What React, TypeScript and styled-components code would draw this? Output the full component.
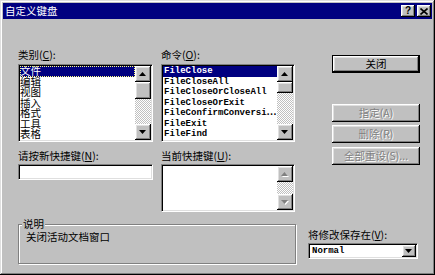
import React from "react";
import styled, { createGlobalStyle } from "styled-components";

const cjk = `"Noto Sans CJK SC", "Liberation Sans", sans-serif`;
const mono = `"Liberation Mono", "Noto Sans CJK SC", monospace`;

const GlobalStyle = createGlobalStyle`
  html, body {
    margin: 0;
    padding: 0;
    background: #c0c0c0;
  }
  body {
    font-family: ${cjk};
  }
`;

const raised = `
  box-shadow: inset -1px -1px #000, inset 1px 1px #fff, inset -2px -2px #808080, inset 2px 2px #dfdfdf;
`;

const sunken = `
  border: 1px solid;
  border-color: #808080 #fff #fff #808080;
  box-shadow: inset 1px 1px #000, inset -1px -1px #dfdfdf;
`;

const Window = styled.div`
  width: 435px;
  height: 275px;
  box-sizing: border-box;
  padding: 3px;
  background: #c0c0c0;
  box-shadow: inset -1px -1px #000, inset 1px 1px #dfdfdf, inset -2px -2px #808080, inset 2px 2px #fff;
  display: flex;
  flex-direction: column;
  font-family: ${cjk};
  font-size: 10.5px;
  color: #000;
`;

const TitleBar = styled.div`
  height: 16px;
  background: #000080;
  color: #fff;
  display: flex;
  align-items: center;
  padding: 0 1px 0 2px;
`;

const Title = styled.span`
  flex: 1;
  font-size: 10.5px;
  line-height: 16px;
  letter-spacing: 0;
`;

const CaptionButton = styled.div`
  width: 14px;
  height: 12px;
  margin-left: 2px;
  background: #c0c0c0;
  color: #000;
  display: flex;
  align-items: center;
  justify-content: center;
  font-family: "Liberation Sans", sans-serif;
  font-weight: bold;
  font-size: 10px;
  line-height: 12px;
  ${raised}
`;

const Body = styled.div`
  flex: 1;
  padding: 30px 0 0 15px;
  display: flex;
  flex-direction: column;
`;

const TopArea = styled.div`
  display: flex;
  align-items: flex-start;
`;

const Fields = styled.div`
  display: grid;
  grid-template-columns: 135px 134px;
  column-gap: 8px;
  row-gap: 8px;
`;

const Field = styled.div<{ $gap: number }>`
  display: flex;
  flex-direction: column;
  gap: ${(p) => p.$gap}px;
`;

const Label = styled.div`
  line-height: 12px;
  height: 12px;
  white-space: nowrap;
`;

const ListBox = styled.div<{ $h: number }>`
  height: ${(p) => p.$h}px;
  box-sizing: border-box;
  background: #fff;
  display: flex;
  padding: 1px;
  ${sunken}
`;

const Items = styled.div<{ $mono?: boolean }>`
  flex: 1;
  min-width: 0;
  overflow: hidden;
  font-family: ${(p) => (p.$mono ? mono : cjk)};
  font-size: ${(p) => (p.$mono ? "9px" : "10.5px")};
  font-weight: ${(p) => (p.$mono ? "bold" : "normal")};
`;

const Item = styled.div<{ $selected?: boolean; $focus?: boolean; $pad: number }>`
  height: 10.5px;
  line-height: 10.5px;
  padding-left: ${(p) => p.$pad}px;
  white-space: nowrap;
  background: ${(p) => (p.$selected ? "#000080" : "transparent")};
  color: ${(p) => (p.$selected ? "#fff" : "#000")};
  outline: ${(p) => (p.$focus ? "1px dotted #ffff80" : "none")};
  outline-offset: -1px;
`;

const Scrollbar = styled.div`
  width: 16px;
  display: flex;
  flex-direction: column;
`;

const ArrowButton = styled.div`
  width: 16px;
  height: 16px;
  flex: none;
  background: #c0c0c0;
  display: flex;
  align-items: center;
  justify-content: center;
  ${raised}
`;

const Track = styled.div`
  flex: 1;
  background: repeating-conic-gradient(#fff 0 25%, #c0c0c0 0 50%) 0 0 / 2px 2px;
`;

const Thumb = styled.div<{ $h: number }>`
  height: ${(p) => p.$h}px;
  background: #c0c0c0;
  ${raised}
`;

const TextInput = styled.div`
  height: 16px;
  box-sizing: border-box;
  background: #fff;
  ${sunken}
`;

const ButtonColumn = styled.div`
  margin-left: 37px;
  padding-top: 6px;
  display: flex;
  flex-direction: column;
`;

const Button = styled.div<{ $default?: boolean; $disabled?: boolean; $top: number }>`
  width: 88px;
  height: 18px;
  margin-top: ${(p) => p.$top}px;
  box-sizing: border-box;
  background: #c0c0c0;
  display: flex;
  align-items: center;
  justify-content: center;
  line-height: 12px;
  color: ${(p) => (p.$disabled ? "#808080" : "#000")};
  text-shadow: ${(p) => (p.$disabled ? "1px 1px #fff" : "none")};
  box-shadow: ${(p) =>
    p.$default
      ? "inset 0 0 0 1px #000, inset -2px -2px #000, inset 2px 2px #fff, inset -3px -3px #808080, inset 3px 3px #dfdfdf"
      : "inset -1px -1px #000, inset 1px 1px #fff, inset -2px -2px #808080, inset 2px 2px #dfdfdf"};
`;

const Bottom = styled.div`
  display: flex;
  margin-top: 6px;
`;

const Group = styled.div`
  width: 278px;
  height: 40px;
  margin-top: 6px;
  box-sizing: border-box;
  border: 1px solid #808080;
  box-shadow: inset 1px 1px #fff, 1px 1px #fff;
  padding: 0 0 0 7px;
`;

const Legend = styled.div`
  width: fit-content;
  margin: -7px 0 0 -4px;
  padding: 0 1px;
  background: #c0c0c0;
  line-height: 12px;
`;

const Description = styled.div`
  margin-top: 1px;
  line-height: 12px;
`;

const SaveIn = styled.div`
  margin-left: 12px;
  padding-top: 11px;
  display: flex;
  flex-direction: column;
  gap: 2px;
`;

const Combo = styled.div`
  width: 110px;
  height: 16px;
  box-sizing: border-box;
  padding: 1px;
  background: #fff;
  display: flex;
  align-items: stretch;
  ${sunken}
`;

const ComboText = styled.div`
  flex: 1;
  padding-left: 2px;
  font-family: ${mono};
  font-size: 9px;
  font-weight: bold;
  line-height: 12px;
`;

const DropButton = styled.div`
  width: 14px;
  background: #c0c0c0;
  display: flex;
  align-items: center;
  justify-content: center;
  ${raised}
`;

const Arrow: React.FC<{ down?: boolean; disabled?: boolean }> = ({ down, disabled }) => {
  const pts = down ? "0,0 7,0 3.5,4" : "3.5,0 7,4 0,4";
  return (
    <svg width="8" height="5" viewBox="0 0 8 5">
      {disabled && <polygon points={pts} fill="#fff" transform="translate(1,1)" />}
      <polygon points={pts} fill={disabled ? "#808080" : "#000"} />
    </svg>
  );
};

const CloseGlyph = () => (
  <svg width="8" height="7" viewBox="0 0 8 7">
    <path d="M0.5 0.5 L7.5 6.5 M7.5 0.5 L0.5 6.5" stroke="#000" strokeWidth="1.6" />
  </svg>
);

const categories = ["文件", "编辑", "视图", "插入", "格式", "工具", "表格"];
const commands = [
  "FileClose",
  "FileCloseAll",
  "FileCloseOrCloseAll",
  "FileCloseOrExit",
  "FileConfirmConversi⋯",
  "FileExit",
  "FileFind",
];

const App: React.FC = () => {
  return (
    <>
      <GlobalStyle />
      <Window>
        <TitleBar>
          <Title>自定义键盘</Title>
          <CaptionButton>?</CaptionButton>
          <CaptionButton>
            <CloseGlyph />
          </CaptionButton>
        </TitleBar>
        <Body>
          <TopArea>
            <Fields>
              <Field $gap={3}>
                <Label>
                  类别(<u>C</u>):
                </Label>
                <ListBox $h={78}>
                  <Items>
                    {categories.map((c, i) => (
                      <Item key={c} $pad={0} $selected={i === 0} $focus={i === 0}>
                        {c}
                      </Item>
                    ))}
                  </Items>
                  <Scrollbar>
                    <ArrowButton>
                      <Arrow />
                    </ArrowButton>
                    <Thumb $h={17} />
                    <Track />
                    <ArrowButton>
                      <Arrow down />
                    </ArrowButton>
                  </Scrollbar>
                </ListBox>
              </Field>
              <Field $gap={3}>
                <Label>
                  命令(<u>O</u>):
                </Label>
                <ListBox $h={78}>
                  <Items $mono>
                    {commands.map((c, i) => (
                      <Item key={c} $pad={1} $selected={i === 0}>
                        {c}
                      </Item>
                    ))}
                  </Items>
                  <Scrollbar>
                    <ArrowButton>
                      <Arrow />
                    </ArrowButton>
                    <Thumb $h={11} />
                    <Track />
                    <ArrowButton>
                      <Arrow down />
                    </ArrowButton>
                  </Scrollbar>
                </ListBox>
              </Field>
              <Field $gap={2}>
                <Label>
                  请按新快捷键(<u>N</u>):
                </Label>
                <TextInput />
              </Field>
              <Field $gap={2}>
                <Label>
                  当前快捷键(<u>U</u>):
                </Label>
                <ListBox $h={48}>
                  <Items />
                  <Scrollbar>
                    <ArrowButton>
                      <Arrow disabled />
                    </ArrowButton>
                    <Track />
                    <ArrowButton>
                      <Arrow down disabled />
                    </ArrowButton>
                  </Scrollbar>
                </ListBox>
              </Field>
            </Fields>
            <ButtonColumn>
              <Button $default $top={0}>
                关闭
              </Button>
              <Button $disabled $top={31}>
                指定(A)
              </Button>
              <Button $disabled $top={3}>
                删除(R)
              </Button>
              <Button $disabled $top={4}>
                全部重设(S)...
              </Button>
            </ButtonColumn>
          </TopArea>
          <Bottom>
            <Group>
              <Legend>说明</Legend>
              <Description>关闭活动文档窗口</Description>
            </Group>
            <SaveIn>
              <Label>
                将修改保存在(<u>V</u>):
              </Label>
              <Combo>
                <ComboText>Normal</ComboText>
                <DropButton>
                  <Arrow down />
                </DropButton>
              </Combo>
            </SaveIn>
          </Bottom>
        </Body>
      </Window>
    </>
  );
};

export default App;
